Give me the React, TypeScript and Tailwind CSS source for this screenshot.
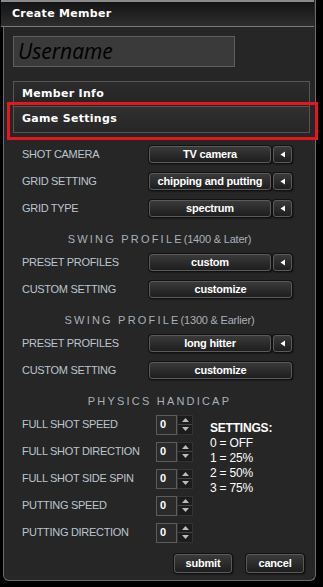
import React from "react";

const labelCls =
  "w-[127px] shrink-0 text-[11px] tracking-[-0.3px] text-[#bcc5cf] font-['Liberation_Sans',Arial,sans-serif]";

function Btn({ children, className = "" }: { children: React.ReactNode; className?: string }) {
  return (
    <div
      className={`flex items-center justify-center h-[17px] rounded-[3px] border border-[#5a5a5a] bg-gradient-to-b from-[#3a3a3a] to-[#1e1e1e] shadow-[0_0_0_1px_#111,1px_1px_2px_#000] text-white font-bold text-[11px] tracking-[-0.2px] font-['Liberation_Sans',Arial,sans-serif] ${className}`}
    >
      {children}
    </div>
  );
}

function Select({ value }: { value: string }) {
  return (
    <div className="flex gap-[2px]">
      <Btn className="w-[122px]">{value}</Btn>
      <Btn className="w-[19px]">
        <svg width="6" height="7" viewBox="0 0 6 7">
          <path d="M5 0.5 L0.5 3.5 L5 6.5 Z" fill="#fff" />
        </svg>
      </Btn>
    </div>
  );
}

function Row({ label, children }: { label: string; children: React.ReactNode }) {
  return (
    <div className="flex items-center h-[27px]">
      <div className={labelCls}>{label}</div>
      {children}
    </div>
  );
}

function Heading({ title, sub }: { title: string; sub?: string }) {
  return (
    <div className="flex items-center justify-center h-[27px] pt-[8px] text-[#a9b1ba] font-['Liberation_Sans',Arial,sans-serif]">
      <span className="text-[11px] tracking-[2.2px]">{title}</span>
      {sub && <span className="text-[11px] tracking-[-0.2px]">{sub}</span>}
    </div>
  );
}

function Spinner() {
  return (
    <div className="flex ml-[7px]">
      <div className="w-[21px] h-[20px] border border-[#5c5c5c] bg-[#2a2a2a] flex items-center pl-[3px] text-white font-bold text-[11px] font-['Liberation_Sans',Arial,sans-serif]">
        0
      </div>
      <div className="w-[16px] h-[20px] flex flex-col bg-[#1c1c1c] border border-[#333]">
        <div className="flex-1 flex items-center justify-center border-b border-[#444]">
          <svg width="7" height="4" viewBox="0 0 7 4">
            <path d="M0 4 L3.5 0 L7 4 Z" fill="#bbb" />
          </svg>
        </div>
        <div className="flex-1 flex items-center justify-center">
          <svg width="7" height="4" viewBox="0 0 7 4">
            <path d="M0 0 L3.5 4 L7 0 Z" fill="#bbb" />
          </svg>
        </div>
      </div>
    </div>
  );
}

export default function App() {
  return (
    <div className="w-[323px] h-[587px] bg-black overflow-hidden">
      <div className="ml-[3px] w-[313px] h-[581px] bg-[#262626] border-x border-b border-[#6a6a6a] rounded-b-[6px]">
        {/* header */}
        <div className="h-[27px] -ml-[3px] w-[313px] border-t-2 border-[#8a8a8a] border-b border-b-[#7a7a7a] bg-gradient-to-b from-[#141414] to-[#2e2e2e] flex items-center pl-[11px]">
          <span className="text-white font-bold text-[11px] tracking-[0.3px] font-['DejaVu_Sans',sans-serif]">
            Create Member
          </span>
        </div>

        {/* username */}
        <div className="mt-[9px] ml-[9px] w-[222px] h-[31px] bg-[#3a3a3a] border border-[#5e5e5e] flex items-center pl-[4px]">
          <span className="italic text-[21px] text-black font-['Open_Sans',sans-serif]">Username</span>
        </div>

        {/* accordion */}
        <div className="mt-[14px] ml-[9px] w-[297px]">
          <div className="h-[26px] border border-[#555] bg-gradient-to-b from-[#2c2c2c] to-[#242424] flex items-center pl-[8px]">
            <span className="text-white font-bold text-[11px] tracking-[0.3px] font-['DejaVu_Sans',sans-serif]">
              Member Info
            </span>
          </div>
          <div className="relative h-[26px] border border-t-0 border-[#555] bg-gradient-to-b from-[#303030] to-[#262626] flex items-center pl-[8px]">
            <span className="text-white font-bold text-[11px] tracking-[0.3px] font-['DejaVu_Sans',sans-serif]">
              Game Settings
            </span>
            <div className="absolute -left-[7px] -right-[9px] -top-[5px] -bottom-[8px] border-[3px] border-[#e5161e]" />
          </div>
        </div>

        {/* settings */}
        <div className="pl-[18px] mt-[8px]">
          <Row label="SHOT CAMERA">
            <Select value="TV camera" />
          </Row>
          <Row label="GRID SETTING">
            <Select value="chipping and putting" />
          </Row>
          <Row label="GRID TYPE">
            <Select value="spectrum" />
          </Row>
        </div>
        <Heading title="SWING PROFILE" sub="(1400 & Later)" />
        <div className="pl-[18px]">
          <Row label="PRESET PROFILES">
            <Select value="custom" />
          </Row>
          <Row label="CUSTOM SETTING">
            <Btn className="w-[143px]">customize</Btn>
          </Row>
        </div>
        <Heading title="SWING PROFILE" sub="(1300 & Earlier)" />
        <div className="pl-[18px]">
          <Row label="PRESET PROFILES">
            <Select value="long hitter" />
          </Row>
          <Row label="CUSTOM SETTING">
            <Btn className="w-[143px]">customize</Btn>
          </Row>
        </div>
        <Heading title="PHYSICS HANDICAP" />

        <div className="pl-[18px] flex">
          <div>
            {["FULL SHOT SPEED", "FULL SHOT DIRECTION", "FULL SHOT SIDE SPIN", "PUTTING SPEED", "PUTTING DIRECTION"].map(
              (l) => (
                <div key={l} className="flex items-center h-[27px]">
                  <div className={labelCls}>{l}</div>
                  <Spinner />
                </div>
              )
            )}
          </div>
          <div className="ml-[17px] pt-[10px] text-white text-[12px] leading-[15px] tracking-[-0.2px] font-['Liberation_Sans',Arial,sans-serif]">
            <div className="font-bold">SETTINGS:</div>
            <div>0 = OFF</div>
            <div>1 = 25%</div>
            <div>2 = 50%</div>
            <div>3 = 75%</div>
          </div>
        </div>

        <div className="flex justify-end gap-[14px] pr-[11px] mt-[8px]">
          <Btn className="w-[58px] !h-[19px]">submit</Btn>
          <Btn className="w-[58px] !h-[19px]">cancel</Btn>
        </div>
      </div>
    </div>
  );
}
